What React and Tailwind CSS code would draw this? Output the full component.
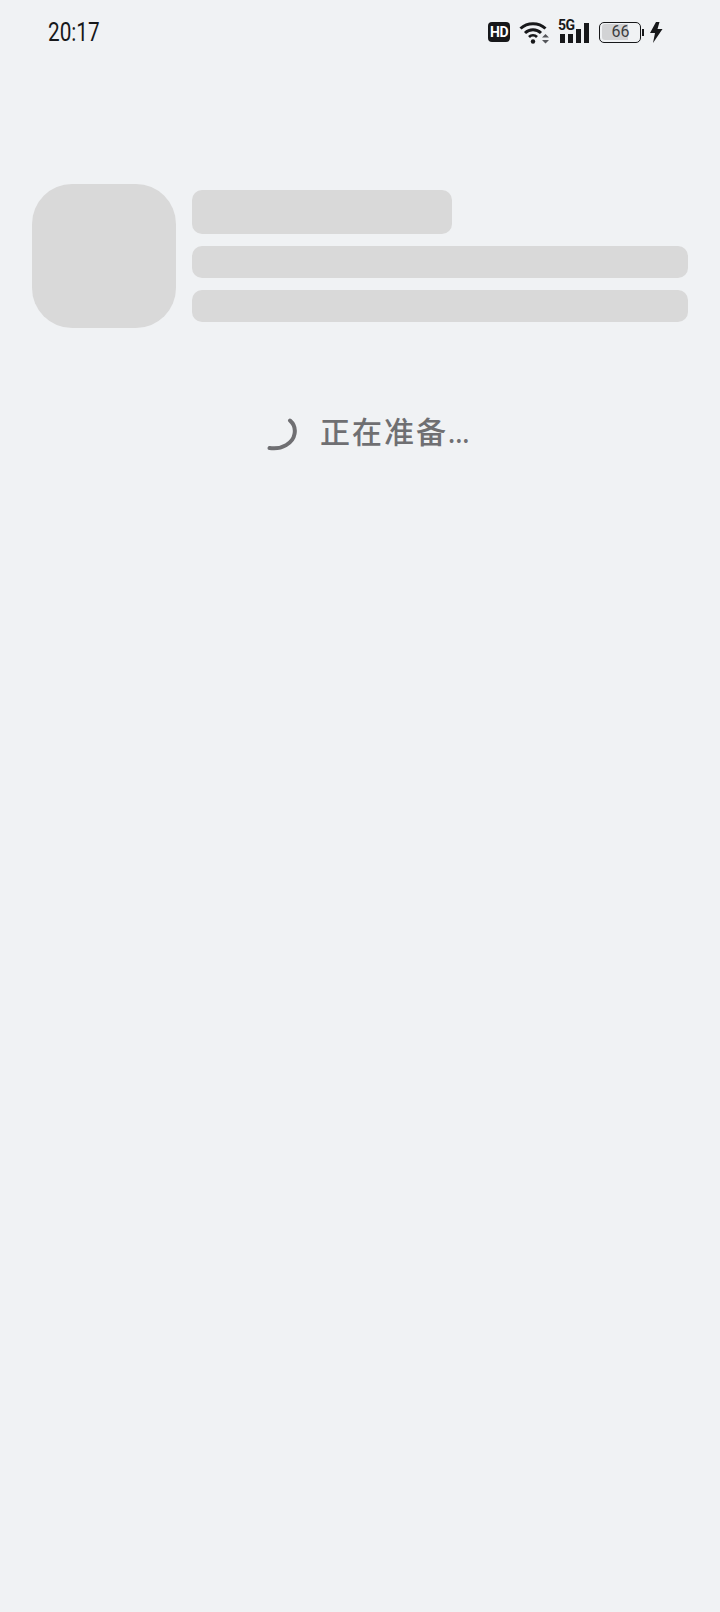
const cjk = "font-['Noto_Sans_CJK_SC',sans-serif]";

const Wifi = () => (
  <svg width="30" height="24" viewBox="0 0 30 24" fill="none" className="text-[#17181a]">
    <path d="M1.5 8.5C8.5 2 19.5 2 26.5 8.5" stroke="currentColor" strokeWidth="3" />
    <path d="M6 13C10.5 8.8 17.5 8.8 22 13" stroke="currentColor" strokeWidth="3" />
    <path d="M10 17C12.3 14.8 15.7 14.8 18 17" stroke="currentColor" strokeWidth="2.8" />
    <circle cx="14" cy="21.5" r="2.2" fill="currentColor" />
    <path d="M23 17.5L26.5 14L30 17.5Z M23 20L26.5 23.5L30 20Z" fill="#55565a" />
  </svg>
);

const Signal = () => (
  <div className="relative w-[31px] h-[22px] flex items-end gap-[3px] justify-end">
    <span className="absolute left-0 -top-[3px] text-[14px] leading-[14px] font-bold text-[#17181a] font-['Roboto',sans-serif] tracking-[-0.5px]">5G</span>
    <div className="w-[5px] h-[9px] bg-[#17181a]" />
    <div className="w-[5px] h-[9px] bg-[#17181a]" />
    <div className="w-[5px] h-[14px] bg-[#17181a]" />
    <div className="w-[5px] h-[20px] bg-[#17181a]" />
  </div>
);

const Battery = () => (
  <div className="flex items-center">
    <div className="w-[42px] h-[21px] rounded-[5px] border-[1.5px] border-[#17181a] p-[1.5px]">
      <div className="w-[26px] h-full rounded-l-[3px] bg-[#d2d3d5] relative">
        <span className="absolute left-[9px] top-[0px] w-[20px] text-center text-[16px] leading-[15px] text-[#3c3d40] font-['Roboto',sans-serif]">66</span>
      </div>
    </div>
    <div className="ml-[1px] w-[2px] h-[7px] bg-[#17181a]" />
  </div>
);

const Bolt = () => (
  <svg width="14" height="21" viewBox="0 0 14 21" className="ml-[5px]">
    <path d="M7 0L1 11H6L4 21L13.5 7H8.5L10.5 0Z" fill="#17181a" />
  </svg>
);

const Spinner = () => (
  <svg width="36" height="38" viewBox="0 0 36 38" fill="none">
    <path d="M26 7.5C30 11 31.5 16 30.5 21C29 30 18 37 5.5 35" stroke="#6f6f72" strokeWidth="4" strokeLinecap="round" />
  </svg>
);

export default function App() {
  return (
    <div className="w-[720px] h-[1612px] bg-[#f0f2f4] overflow-hidden">
      <div className="h-[64px] pl-[48px] pr-[57px] pt-[20px] flex justify-between items-start">
        <span className="text-[25px] leading-[26px] text-[#17181a] font-['Roboto',sans-serif] inline-block origin-left scale-x-[0.83]">20:17</span>
        <div className="flex items-center h-[24px]">
          <div className="w-[22px] h-[20px] rounded-[4px] bg-[#17181a] flex items-center justify-center text-white text-[14px] font-bold font-['Roboto',sans-serif] tracking-[-0.5px]">HD</div>
          <div className="ml-[9px] mr-[9px]"><Wifi /></div>
          <Signal />
          <div className="ml-[10px]"><Battery /></div>
          <Bolt />
        </div>
      </div>

      <div className="mt-[120px] px-[32px] flex gap-[16px] items-center">
        <div className="w-[144px] h-[144px] rounded-[40px] bg-[#d9d9d9] shrink-0" />
        <div className="flex-1 flex flex-col gap-[12px]">
          <div className="w-[260px] h-[44px] rounded-[10px] bg-[#d9d9d9]" />
          <div className="h-[32px] rounded-[10px] bg-[#d9d9d9]" />
          <div className="h-[32px] rounded-[10px] bg-[#d9d9d9]" />
        </div>
      </div>

      <div className="mt-[82px] pl-[264px] flex items-center">
        <Spinner />
        <span className={`ml-[20px] text-[30px] leading-[40px] font-medium tracking-[2px] text-[#6f6f72] ${cjk}`}>
          正在准备<span className="text-[24px] tracking-[0px]">...</span>
        </span>
      </div>
    </div>
  );
}
